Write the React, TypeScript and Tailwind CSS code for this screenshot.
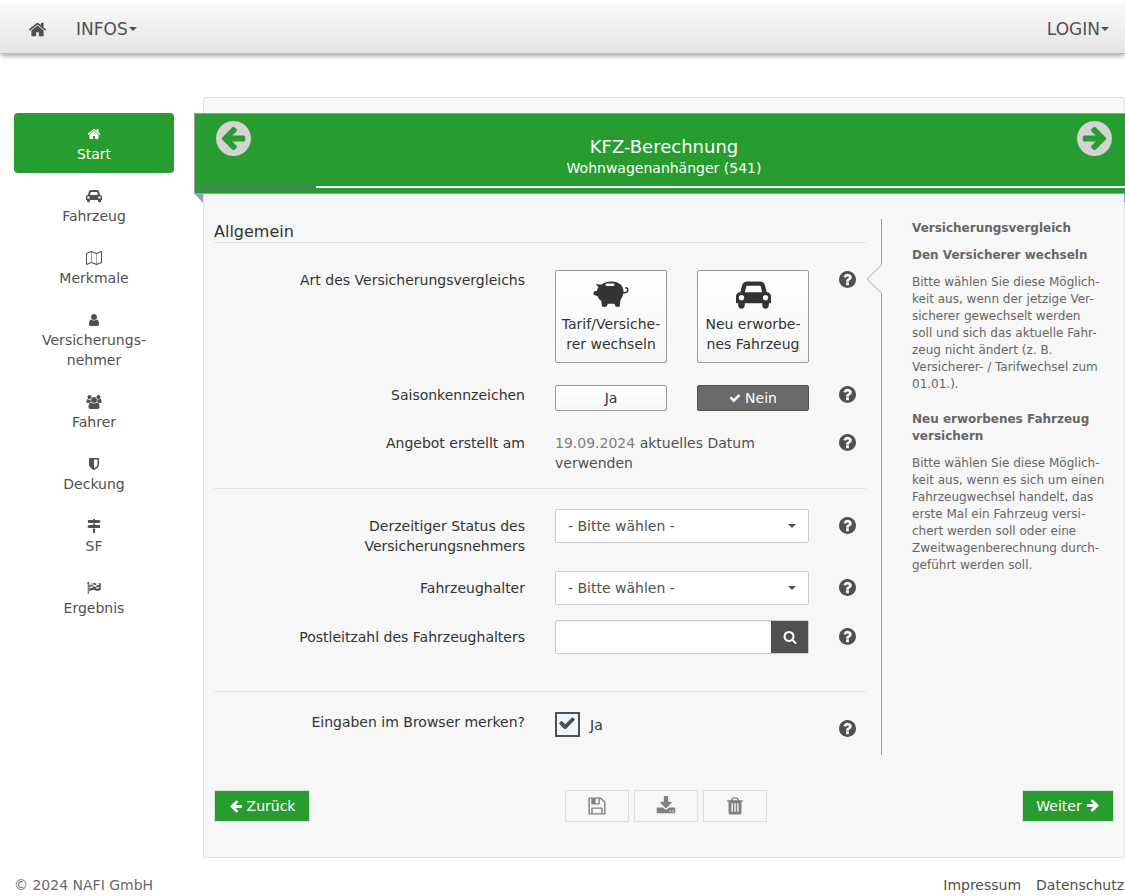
import { useState, type ReactNode } from 'react'

const ICONS = {
  home: {
    box: '0 0 1792 1792',
    d: 'M1472 992v480q0 26-19 45t-45 19h-384v-384h-256v384h-384q-26 0-45-19t-19-45v-480q0-1 .5-3t.5-3l575-474 575 474q1 2 1 6zm223-69l-62 74q-8 9-21 11h-3q-13 0-21-7l-692-577-692 577q-12 8-24 7-13-2-21-11l-62-74q-8-10-7-23.5t11-21.5l719-599q32-26 76-26t76 26l244 204v-195q0-14 9-23t23-9h192q14 0 23 9t9 23v408l219 182q10 8 11 21.5t-7 23.5z',
  },
  car: {
    box: '0 0 2048 1792',
    d: 'M480 1088q0-66-47-113t-113-47-113 47-47 113 47 113 113 47 113-47 47-113zm36-320h1016l-89-357q-2-8-14-17.5t-21-9.5h-768q-9 0-21 9.5t-14 17.5zm1372 320q0-66-47-113t-113-47-113 47-47 113 47 113 113 47 113-47 47-113zm160-96v384q0 14-9 23t-23 9h-96v128q0 80-56 136t-136 56-136-56-56-136v-128h-1024v128q0 80-56 136t-136 56-136-56-56-136v-128h-96q-14 0-23-9t-9-23v-384q0-93 65.5-158.5t158.5-65.5h28l105-419q23-94 104-157.5t179-63.5h768q98 0 179 63.5t104 157.5l105 419h28q93 0 158.5 65.5t65.5 158.5z',
  },
  map: {
    box: '0 0 2048 1792',
    d: 'M2020 11q28 20 28 53v1408q0 20-11 36t-29 23l-640 256q-24 11-48 0l-616-246-616 246q-10 5-24 5-19 0-36-11-28-20-28-53v-1408q0-20 11-36t29-23l640-256q24-11 48 0l616 246 616-246q32-13 60 6zm-1284 135v1270l576 230v-1270zm-608 217v1270l544-217v-1270zm1792 1066v-1270l-544 217v1270z',
  },
  user: {
    box: '0 0 1792 1792',
    d: 'M1536 1399q0 109-62.5 187t-150.5 78h-854q-88 0-150.5-78t-62.5-187q0-85 8.5-160.5t31.5-152 58.5-131 94-89 134.5-34.5q131 128 313 128t313-128q76 0 134.5 34.5t94 89 58.5 131 31.5 152 8.5 160.5zm-256-887q0 159-112.5 271.5t-271.5 112.5-271.5-112.5-112.5-271.5 112.5-271.5 271.5-112.5 271.5 112.5 112.5 271.5z',
  },
  users: {
    box: '0 0 2048 1792',
    d: 'M657 896q-162 5-265 128h-134q-82 0-138-40.5t-56-118.5q0-353 124-353 6 0 43.5 21t97.5 42.5 119 21.5q67 0 133-23-5 37-5 66 0 159 89 294zm1071 637q0 120-73 189.5t-194 69.5h-874q-121 0-194-69.5t-73-189.5q0-53 3.5-103.5t14-109 26.5-108.5 43-97.5 62-81 85.5-53.5 111.5-20q10 0 43 21.5t73 48 107 48 135 21.5 135-21.5 107-48 73-48 43-21.5q61 0 111.5 20t85.5 53.5 62 81 43 97.5 26.5 108.5 14 109 3.5 103.5zm-1024-1277q0 106-75 181t-181 75-181-75-75-181 75-181 181-75 181 75 75 181zm704 384q0 159-112.5 271.5t-271.5 112.5-271.5-112.5-112.5-271.5 112.5-271.5 271.5-112.5 271.5 112.5 112.5 271.5zm576 225q0 78-56 118.5t-138 40.5h-134q-103-123-265-128 89-135 89-294 0-29-5-66 66 23 133 23 59 0 119-21.5t97.5-42.5 43.5-21q124 0 124 353zm-128-609q0 106-75 181t-181 75-181-75-75-181 75-181 181-75 181 75 75 181z',
  },
  shield: {
    box: '0 0 1792 1792',
    d: 'M1344 960v-640h-448v1137q119-63 213-137 235-184 235-360zm192-768v768q0 86-33.5 170.5t-83 150-118 127.5-126.5 103-121 77.5-89.5 49.5-42.5 20q-12 6-26 6t-26-6q-16-7-42.5-20t-89.5-49.5-121-77.5-126.5-103-118-127.5-83-150-33.5-170.5v-768q0-26 19-45t45-19h1152q26 0 45 19t19 45z',
  },
  signs: {
    box: '0 0 1792 1792',
    d: 'M1745 297q10 10 10 23t-10 23l-141 141q-28 28-68 28h-1344q-26 0-45-19t-19-45v-256q0-26 19-45t45-19h576v-64q0-26 19-45t45-19h128q26 0 45 19t19 45v64h512q40 0 68 28zm-977 919h256v512q0 26-19 45t-45 19h-128q-26 0-45-19t-19-45v-512zm832-448q26 0 45 19t19 45v256q0 26-19 45t-45 19h-1344q-40 0-68-28l-141-141q-10-10-10-23t10-23l141-141q28-28 68-28h512v-192h256v192h576z',
  },
  flag: {
    box: '96 0 1792 1792',
    d: 'M832 864v-192q-181 16-384 117v185q205-96 384-110zm0-418v-197q-172 8-384 126v189q215-111 384-118zm832 463v-184q-235 116-384 71v-224q-20-6-39-15-5-3-33-17t-34.5-17-31.5-15-34.5-15.5-32.5-13-36-12.5-35-8.5-39.5-7.5-39.5-4-44-2q-23 0-49 3v222h19q102 0 192.5 29t197.5 82q19 9 39 15v188q42 17 91 17 120 0 293-92zm0-427v-189q-169 91-306 91-45 0-78-8v196q148 42 384-90zm-1280-226q0 35-17.5 64t-46.5 46v1266q0 14-9 23t-23 9h-64q-14 0-23-9t-9-23v-1266q-29-17-46.5-46t-17.5-64q0-53 37.5-90.5t90.5-37.5 90.5 37.5 37.5 90.5zm1472 64v763q0 39-35 57-10 5-17 9-218 116-369 116-88 0-158-35l-28-14q-64-33-99-48t-91-29-114-14q-102 0-235.5 44t-228.5 102q-15 9-33 9-16 0-32-8-32-19-32-56v-742q0-35 31-55 35-21 78.5-42.5t114-52 152.5-49.5 155-19q112 0 209 31t209 86q38 19 89 19 122 0 310-112 22-12 31-17 31-16 62 2 31 20 31 55z',
  },
  arrow: {
    box: '0 0 1792 1792',
    d: 'M1664 896v128q0 53-32.5 90.5t-84.5 37.5h-704l293 294q38 36 38 90t-38 90l-75 76q-37 37-90 37-52 0-91-37l-651-652q-37-37-37-90 0-52 37-91l651-650q38-38 91-38 52 0 90 38l75 74q38 38 38 91t-38 91l-293 293h704q52 0 84.5 37.5t32.5 90.5z',
  },
  arrowCircle: {
    box: '128 128 1536 1536',
    d: 'M1408 960v-128q0-26-19-45t-45-19h-502l189-189q19-19 19-45t-19-45l-91-91q-18-18-45-18t-45 18l-362 362-91 91q-18 18-18 45t18 45l91 91 362 362q18 18 45 18t45-18l91-91q18-18 18-45t-18-45l-189-189h502q26 0 45-19t19-45zm256-64q0 209-103 385.5t-279.5 279.5-385.5 103-385.5-103-279.5-279.5-103-385.5 103-385.5 279.5-279.5 385.5-103 385.5 103 279.5 279.5 103 385.5z',
  },
  check: {
    box: '0 0 1792 1792',
    d: 'M1671 566q0 40-28 68l-724 724-136 136q-28 28-68 28t-68-28l-136-136-362-362q-28-28-28-68t28-68l136-136q28-28 68-28t68 28l294 295 656-657q28-28 68-28t68 28l136 136q28 28 28 68z',
  },
  help: {
    box: '128 128 1536 1536',
    d: 'M1024 1376v-192q0-14-9-23t-23-9h-192q-14 0-23 9t-9 23v192q0 14 9 23t23 9h192q14 0 23-9t9-23zm256-672q0-88-55.5-163t-138.5-116-170-41q-243 0-371 213-15 24 8 42l132 100q7 6 19 6 16 0 25-12 53-68 86-92 34-24 86-24 48 0 85.5 26t37.5 59q0 38-20 61t-68 45q-63 28-115.5 86.5t-52.5 125.5v36q0 14 9 23t23 9h192q14 0 23-9t9-23q0-19 21.5-49.5t54.5-49.5q32-18 49-28.5t46-35 44.5-48 28-60.5 12.5-81zm384 192q0 209-103 385.5t-279.5 279.5-385.5 103-385.5-103-279.5-279.5-103-385.5 103-385.5 279.5-279.5 385.5-103 385.5 103 279.5 279.5 103 385.5z',
  },
  search: {
    box: '0 0 1792 1792',
    d: 'M1216 832q0-185-131.5-316.5t-316.5-131.5-316.5 131.5-131.5 316.5 131.5 316.5 316.5 131.5 316.5-131.5 131.5-316.5zm512 832q0 52-38 90t-90 38q-54 0-90-38l-343-342q-179 124-399 124-143 0-273.5-55.5t-225-150-150-225-55.5-273.5 55.5-273.5 150-225 225-150 273.5-55.5 273.5 55.5 225 150 150 225 55.5 273.5q0 220-124 399l343 343q37 37 37 90z',
  },
  save: {
    box: '0 0 1792 1792',
    d: 'M512 1536h768v-384h-768v384zm896 0h128v-896q0-14-10-38.5t-20-34.5l-281-281q-10-10-34-20t-39-10v416q0 40-28 68t-68 28h-576q-40 0-68-28t-28-68v-416h-128v1280h128v-416q0-40 28-68t68-28h832q40 0 68 28t28 68v416zm-384-928v-320q0-13-9.5-22.5t-22.5-9.5h-192q-13 0-22.5 9.5t-9.5 22.5v320q0 13 9.5 22.5t22.5 9.5h192q13 0 22.5-9.5t9.5-22.5zm640 32v928q0 40-28 68t-68 28h-1344q-40 0-68-28t-28-68v-1344q0-40 28-68t68-28h928q40 0 88 20t76 48l280 280q28 28 48 76t20 88z',
  },
  download: {
    box: '0 0 1792 1792',
    d: 'M1344 1344q0-26-19-45t-45-19-45 19-19 45 19 45 45 19 45-19 19-45zm256 0q0-26-19-45t-45-19-45 19-19 45 19 45 45 19 45-19 19-45zm128-224v320q0 40-28 68t-68 28h-1472q-40 0-68-28t-28-68v-320q0-40 28-68t68-28h465l135 136q58 56 136 56t136-56l136-136h464q40 0 68 28t28 68zm-325-569q17 41-14 70l-448 448q-18 19-45 19t-45-19l-448-448q-31-29-14-70 17-39 59-39h256v-448q0-26 19-45t45-19h256q26 0 45 19t19 45v448h256q42 0 59 39z',
  },
  trash: {
    box: '0 0 1792 1792',
    d: 'M704 1376v-704q0-14-9-23t-23-9h-64q-14 0-23 9t-9 23v704q0 14 9 23t23 9h64q14 0 23-9t9-23zm256 0v-704q0-14-9-23t-23-9h-64q-14 0-23 9t-9 23v704q0 14 9 23t23 9h64q14 0 23-9t9-23zm256 0v-704q0-14-9-23t-23-9h-64q-14 0-23 9t-9 23v704q0 14 9 23t23 9h64q14 0 23-9t9-23zm-544-992h448l-48-117q-7-9-17-11h-317q-10 2-17 11zm928 32v64q0 14-9 23t-23 9h-96v948q0 83-47 143.5t-113 60.5h-832q-66 0-113-58.5t-47-141.5v-952h-96q-14 0-23-9t-9-23v-64q0-14 9-23t23-9h309l70-167q15-37 54-63t79-26h320q40 0 79 26t54 63l70 167h309q14 0 23 9t9 23z',
  },
  caret: { box: '0 0 8 4', d: 'M0 0h8L4 4z' },
}

type IconName = keyof typeof ICONS

function Icon({ name, className }: { name: IconName; className: string }) {
  return (
    <svg viewBox={ICONS[name].box} className={`shrink-0 fill-current ${className}`} aria-hidden="true">
      <path d={ICONS[name].d} />
    </svg>
  )
}

function PiggyBank() {
  return (
    <svg viewBox="0 0 36 27" className="h-[27px] w-9 fill-current" aria-hidden="true">
      <path
        fillRule="evenodd"
        d="M2.6 3.2 8.6 3.4C11 1.6 14 .5 19 .5c7 0 11.500 4.300 11.500 9.800 0 3.500-1.300 6.200-3 8.700L26.600 25.800H22.700L21.500 22.700H14.800L13.600 25.800H9.200L8.200 19.800C6.400 18.700 5.400 17.300 4.700 15.200L.6 13.800V10.700L3.900 9.700C4.200 8.200 4.700 7 5.400 6zM14 2.500c-1 0-1.500.6-1.500 1.300S13 5 14 5h6c1 0 1.500-.5 1.500-1.200s-.5-1.300-1.500-1.300z"
      />
      <path d="M30 11.500c3.800.8 5.300-1.200 4.600-3.500-.4-1.200-1.300-1.500-1.800-1" fill="none" stroke="currentColor" strokeWidth="1.500" strokeLinecap="round" />
    </svg>
  )
}

const STEPS: { icon: IconName; label: string; hyphenated?: string[] }[] = [
  { icon: 'home', label: 'Start' },
  { icon: 'car', label: 'Fahrzeug' },
  { icon: 'map', label: 'Merkmale' },
  { icon: 'user', label: 'Versicherungsnehmer', hyphenated: ['Versicherungs-', 'nehmer'] },
  { icon: 'users', label: 'Fahrer' },
  { icon: 'shield', label: 'Deckung' },
  { icon: 'signs', label: 'SF' },
  { icon: 'flag', label: 'Ergebnis' },
]

function Lines({ lines }: { lines: string[] }) {
  return (
    <>
      {lines.map((line) => (
        <span className="block whitespace-nowrap" key={line}>{line}</span>
      ))}
    </>
  )
}

function HelpButton({ topic, className = '' }: { topic: string; className?: string }) {
  return (
    <button type="button" aria-label={`Hilfe: ${topic}`} className={`flex h-[19px] w-[17px] items-center text-[#505050] ${className}`}>
      <Icon name="help" className="h-[17px] w-[17px]" />
    </button>
  )
}

function Row({ children, className = '' }: { children: ReactNode; className?: string }) {
  return <div className={`grid grid-cols-[1fr_254px_27px] items-start gap-x-[30px] ${className}`}>{children}</div>
}

function SelectField({ id }: { id: string }) {
  return (
    <div className="relative">
      <select id={id} className="h-[34px] w-full appearance-none rounded-xs border border-[#ccc] bg-white pr-8 pl-3 text-[#505050]">
        <option>- Bitte wählen -</option>
      </select>
      <Icon name="caret" className="pointer-events-none absolute top-[15px] right-[13px] h-1 w-2 text-[#505050]" />
    </div>
  )
}

const choice = 'w-28 rounded-xs border'
const choiceIdle = 'border-[#999] bg-linear-to-b from-white to-[#f4f7f6] text-[#333]'
const choiceActive = 'border-[#505050] bg-[#6a6a6a] text-white'

export default function App() {
  const [compare, setCompare] = useState<string | null>(null)
  const [season, setSeason] = useState('nein')
  const [remember, setRemember] = useState(true)

  return (
    <div className="overflow-x-hidden bg-white pt-[3px] font-['Verdana','DejaVu_Sans',sans-serif] text-sm text-[#333]">
      <header className="flex h-[51px] items-center justify-between border-b border-[#bbb] bg-linear-to-b from-[#fafafa] to-[#e5e5e5] pt-0.5 pr-4 pl-7 text-[17px] text-[#505050] shadow-[0_3px_5px_-1px_rgba(0,0,0,0.35)]">
        <nav className="flex items-center gap-[29px]">
          <a href="#start" aria-label="Startseite">
            <Icon name="home" className="h-[19px] w-[19px]" />
          </a>
          <button type="button" className="flex items-center">
            INFOS
            <Icon name="caret" className="ml-px h-1 w-2" />
          </button>
        </nav>
        <button type="button" className="flex items-center">
          LOGIN
          <Icon name="caret" className="ml-px h-1 w-2" />
        </button>
      </header>

      <div className="mt-[43px] flex items-start pl-[14px]">
        <nav className="mt-4 mr-[29px] flex w-40 shrink-0 flex-col gap-0.5 leading-5">
          {STEPS.map((step, i) => (
            <a
              href="#schritt"
              key={step.label}
              className={`flex flex-col items-center rounded-sm px-2.5 pt-[11px] pb-[9px] ${i === 0 ? 'bg-[#289d2f] text-white' : 'text-[#505050]'}`}
            >
              <span className="flex h-5 items-center">
                <Icon name={step.icon} className="h-3.5 w-4" />
              </span>
              <Lines lines={step.hyphenated ?? [step.label]} />
            </a>
          ))}
        </nav>

        <main className="min-w-0 flex-1 rounded-xs border border-[#d9e2ea] bg-[#f7f7f7] pt-[15px] pb-[35px]">
          {/* Ribbon sticks out of the card on both sides */}
          <div className="relative -mr-[9px] -ml-[10px] border border-[#999] bg-[#289d2f] px-[5px] pb-[5px] text-white">
            <div className="flex h-[72px] items-start justify-between pt-[7px] pr-[15px] pl-4">
              <button type="button" aria-label="Zurück" className="text-[#d3d3d3]">
                <Icon name="arrowCircle" className="h-[35px] w-[35px]" />
              </button>
              <div className="pt-[15px] text-center">
                <h1 className="text-lg leading-[22px] font-medium">KFZ-Berechnung</h1>
                <p className="leading-5">Wohnwagenanhänger (541)</p>
              </div>
              <button type="button" aria-label="Weiter" className="text-[#d3d3d3]">
                <Icon name="arrowCircle" className="h-[35px] w-[35px] rotate-180" />
              </button>
            </div>
            <div className="h-0.5 bg-white" role="progressbar" aria-label="Fortschritt" aria-valuenow={12}>
              <div className="h-0.5 w-1/8 bg-[#6a6a6a]" />
            </div>
            <svg viewBox="0 0 9 10" className="absolute top-full -left-px h-2.5 w-[9px] fill-[#8f9fcd]" aria-hidden="true">
              <path d="M0 0h9v10z" />
            </svg>
            <svg viewBox="0 0 9 10" className="absolute top-full -right-px h-2.5 w-[9px] fill-[#8f9fcd]" aria-hidden="true">
              <path d="M0 0h9L0 10z" />
            </svg>
          </div>

          <div className="mt-[25px] flex px-2.5">
            <form className="mr-[15px] min-w-0 flex-1 pb-[17px] leading-5">
              <h2 className="border-b border-[#e3e3e3] pt-0.5 text-base leading-[21px]">Allgemein</h2>

              <Row className="mt-[27px]">
                <span className="text-right">Art des Versicherungsvergleichs</span>
                <div className="flex justify-between">
                  <button
                    type="button"
                    onClick={() => setCompare('wechseln')}
                    className={`${choice} flex h-[93px] flex-col items-center pt-[9px] ${compare === 'wechseln' ? choiceActive : choiceIdle}`}
                  >
                    <span className="mb-[6px] flex h-7 items-center"><PiggyBank /></span>
                    <Lines lines={['Tarif/Versiche-', 'rer wechseln']} />
                  </button>
                  <button
                    type="button"
                    onClick={() => setCompare('neu')}
                    className={`${choice} flex h-[93px] flex-col items-center pt-[9px] ${compare === 'neu' ? choiceActive : choiceIdle}`}
                  >
                    <span className="mb-[6px] flex h-7 items-center"><Icon name="car" className="h-[31px] w-[35px]" /></span>
                    <Lines lines={['Neu erworbe-', 'nes Fahrzeug']} />
                  </button>
                </div>
                <HelpButton topic="Art des Versicherungsvergleichs" />
              </Row>

              <Row className="mt-[22px]">
                <span className="text-right">Saisonkennzeichen</span>
                <div className="flex justify-between">
                  {['ja', 'nein'].map((value) => (
                    <button
                      type="button"
                      key={value}
                      onClick={() => setSeason(value)}
                      className={`${choice} flex h-[26px] items-center justify-center gap-1 capitalize ${season === value ? choiceActive : choiceIdle}`}
                    >
                      {season === value && <Icon name="check" className="h-3 w-3" />}
                      {value}
                    </button>
                  ))}
                </div>
                <HelpButton topic="Saisonkennzeichen" />
              </Row>

              <Row className="mt-[22px]">
                <span className="text-right">Angebot erstellt am</span>
                <p className="text-[#808080]">
                  19.09.2024{' '}
                  <a href="#datum" className="text-[#505050]">
                    aktuelles Datum
                    <br />
                    verwenden
                  </a>
                </p>
                <HelpButton topic="Angebot erstellt am" />
              </Row>

              <hr className="mt-[15px] border-[#e3e3e3]" />

              <Row className="mt-5">
                <label htmlFor="status" className="pt-[7px] text-right">
                  <Lines lines={['Derzeitiger Status des', 'Versicherungsnehmers']} />
                </label>
                <SelectField id="status" />
                <HelpButton topic="Derzeitiger Status" className="mt-[7px]" />
              </Row>

              <Row className="mt-[15px]">
                <label htmlFor="halter" className="pt-[7px] text-right">Fahrzeughalter</label>
                <SelectField id="halter" />
                <HelpButton topic="Fahrzeughalter" className="mt-[7px]" />
              </Row>

              <Row className="mt-[15px]">
                <label htmlFor="plz" className="pt-[7px] text-right">Postleitzahl des Fahrzeughalters</label>
                <div className="flex h-[34px] rounded-xs border border-[#ccc] bg-white">
                  <input id="plz" type="text" className="min-w-0 flex-1 px-3 shadow-[inset_0_1px_1px_rgba(0,0,0,0.075)] outline-none" />
                  <button type="button" aria-label="Suchen" className="flex w-[37px] items-center justify-center bg-[#505050] text-white">
                    <Icon name="search" className="h-3.5 w-3.5" />
                  </button>
                </div>
                <HelpButton topic="Postleitzahl" className="mt-[7px]" />
              </Row>

              <hr className="mt-[37px] border-[#e3e3e3]" />

              <Row className="mt-5">
                <span className="text-right">Eingaben im Browser merken?</span>
                <label className="flex items-center gap-2.5">
                  <span className="relative h-[25px] w-[25px]">
                    <input
                      type="checkbox"
                      checked={remember}
                      onChange={(e) => setRemember(e.target.checked)}
                      className="block h-[25px] w-[25px] appearance-none border-2 border-[#505050] bg-[#f0f8ff]"
                    />
                    {remember && <Icon name="check" className="pointer-events-none absolute top-0.5 left-[3px] h-[18px] w-[18px] text-[#505050]" />}
                  </span>
                  Ja
                </label>
                <HelpButton topic="Eingaben merken" className="mt-[7px]" />
              </Row>
            </form>

            <aside className="relative w-[233px] shrink-0 border-l border-[#999] pt-px pl-[30px] text-xs leading-[17px] text-[#666]">
              {/* Pointer towards the active question */}
              <svg viewBox="0 0 16 30" className="absolute top-[45px] -left-4 h-[30px] w-4" aria-hidden="true">
                <path d="M15.500 0v30" stroke="#f7f7f7" strokeWidth="1" />
                <path d="M15.500 0v1L1 15l14.500 14v1" fill="#f7f7f7" stroke="#aaa" />
              </svg>
              <h3 className="font-bold">Versicherungsvergleich</h3>
              <h4 className="mt-2.5 font-bold">Den Versicherer wechseln</h4>
              <p className="mt-2.5">
                <Lines
                  lines={[
                    'Bitte wählen Sie diese Möglich-',
                    'keit aus, wenn der jetzige Ver-',
                    'sicherer gewechselt werden',
                    'soll und sich das aktuelle Fahr-',
                    'zeug nicht ändert (z. B.',
                    'Versicherer- / Tarifwechsel zum',
                    '01.01.).',
                  ]}
                />
              </p>
              <h4 className="mt-[18px] font-bold">
                <Lines lines={['Neu erworbenes Fahrzeug', 'versichern']} />
              </h4>
              <p className="mt-2.5">
                <Lines
                  lines={[
                    'Bitte wählen Sie diese Möglich-',
                    'keit aus, wenn es sich um einen',
                    'Fahrzeugwechsel handelt, das',
                    'erste Mal ein Fahrzeug versi-',
                    'chert werden soll oder eine',
                    'Zweitwagenberechnung durch-',
                    'geführt werden soll.',
                  ]}
                />
              </p>
            </aside>
          </div>

          <div className="mt-[35px] flex justify-between px-2.5">
            <button type="button" className="flex h-8 w-24 items-center justify-center gap-1 border border-[#ddd] bg-[#289d2f] text-white">
              <Icon name="arrow" className="h-3.5 w-3.5" />
              Zurück
            </button>
            <div className="flex gap-[5px] text-[#808080]">
              <button type="button" aria-label="Speichern" className="flex h-8 w-16 items-center justify-center border border-[#ddd]">
                <Icon name="save" className="h-5 w-5" />
              </button>
              <button type="button" aria-label="Herunterladen" className="flex h-8 w-16 items-center justify-center border border-[#ddd]">
                <Icon name="download" className="h-5 w-5" />
              </button>
              <button type="button" aria-label="Löschen" className="flex h-8 w-16 items-center justify-center border border-[#ddd]">
                <Icon name="trash" className="h-5 w-5" />
              </button>
            </div>
            <button type="button" className="flex h-8 w-[92px] items-center justify-center gap-1 border border-[#ddd] bg-[#289d2f] text-white">
              Weiter
              <Icon name="arrow" className="h-3.5 w-3.5 rotate-180" />
            </button>
          </div>
        </main>
      </div>

      <footer className="mt-[17px] flex justify-between pr-px pl-[14px] leading-5">
        <span className="text-[#6a6a6a]">© 2024 NAFI GmbH</span>
        <div className="flex gap-[15px] text-[#505050]">
          <a href="#impressum">Impressum</a>
          <a href="#datenschutz">Datenschutz</a>
        </div>
      </footer>
    </div>
  )
}
